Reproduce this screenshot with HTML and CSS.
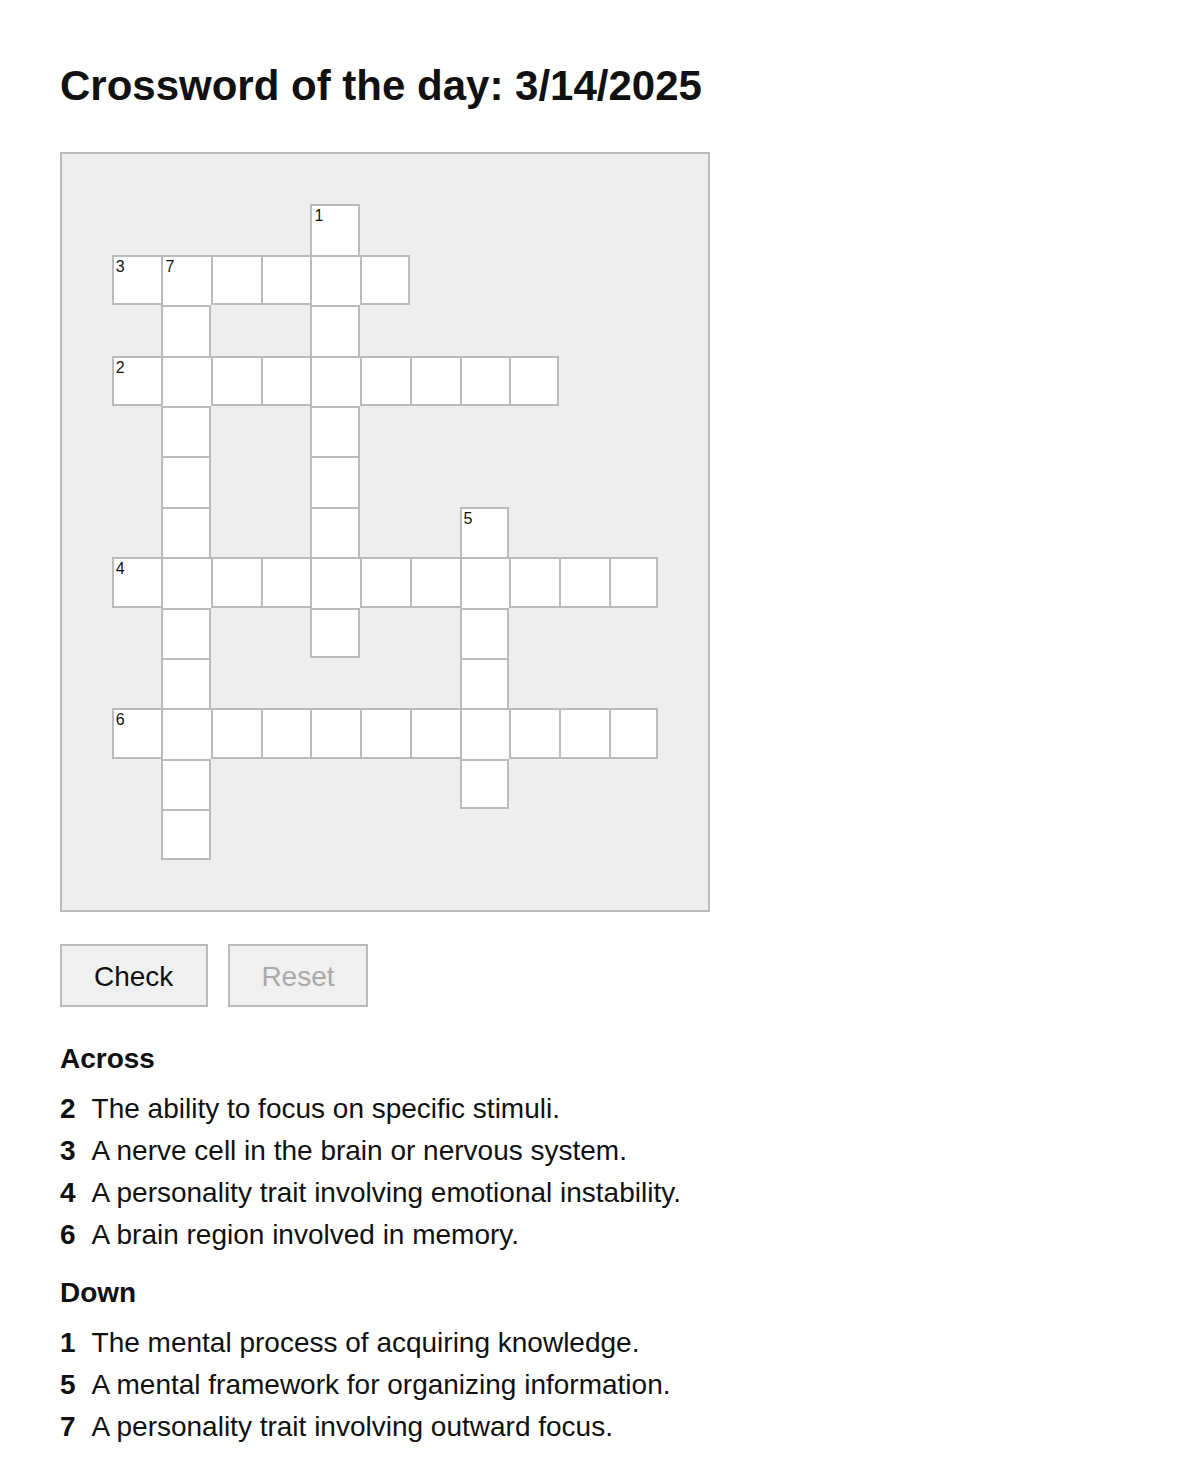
FILE: index.html
```html
<!DOCTYPE html>
<html lang="en">
<head>
<meta charset="utf-8">
<title>Crossword of the day</title>
<link rel="stylesheet" href="styles.css">
</head>
<body>
<main class="page">
  <h1 class="title">Crossword of the day: 3/14/2025</h1>

  <div class="board">
    <div class="cell er" style="grid-area:2/6"><span class="num">1</span></div>

    <div class="cell eb" style="grid-area:3/2"><span class="num">3</span></div>
    <div class="cell" style="grid-area:3/3"><span class="num">7</span></div>
    <div class="cell eb" style="grid-area:3/4"></div>
    <div class="cell eb" style="grid-area:3/5"></div>
    <div class="cell" style="grid-area:3/6"></div>
    <div class="cell er eb" style="grid-area:3/7"></div>

    <div class="cell er" style="grid-area:4/3"></div>
    <div class="cell er" style="grid-area:4/6"></div>

    <div class="cell eb" style="grid-area:5/2"><span class="num">2</span></div>
    <div class="cell" style="grid-area:5/3"></div>
    <div class="cell eb" style="grid-area:5/4"></div>
    <div class="cell eb" style="grid-area:5/5"></div>
    <div class="cell" style="grid-area:5/6"></div>
    <div class="cell eb" style="grid-area:5/7"></div>
    <div class="cell eb" style="grid-area:5/8"></div>
    <div class="cell eb" style="grid-area:5/9"></div>
    <div class="cell er eb" style="grid-area:5/10"></div>

    <div class="cell er" style="grid-area:6/3"></div>
    <div class="cell er" style="grid-area:6/6"></div>

    <div class="cell er" style="grid-area:7/3"></div>
    <div class="cell er" style="grid-area:7/6"></div>

    <div class="cell er" style="grid-area:8/3"></div>
    <div class="cell er" style="grid-area:8/6"></div>
    <div class="cell er" style="grid-area:8/9"><span class="num">5</span></div>

    <div class="cell eb" style="grid-area:9/2"><span class="num">4</span></div>
    <div class="cell" style="grid-area:9/3"></div>
    <div class="cell eb" style="grid-area:9/4"></div>
    <div class="cell eb" style="grid-area:9/5"></div>
    <div class="cell" style="grid-area:9/6"></div>
    <div class="cell eb" style="grid-area:9/7"></div>
    <div class="cell eb" style="grid-area:9/8"></div>
    <div class="cell" style="grid-area:9/9"></div>
    <div class="cell eb" style="grid-area:9/10"></div>
    <div class="cell eb" style="grid-area:9/11"></div>
    <div class="cell er eb" style="grid-area:9/12"></div>

    <div class="cell er" style="grid-area:10/3"></div>
    <div class="cell er eb" style="grid-area:10/6"></div>
    <div class="cell er" style="grid-area:10/9"></div>

    <div class="cell er" style="grid-area:11/3"></div>
    <div class="cell er" style="grid-area:11/9"></div>

    <div class="cell eb" style="grid-area:12/2"><span class="num">6</span></div>
    <div class="cell" style="grid-area:12/3"></div>
    <div class="cell eb" style="grid-area:12/4"></div>
    <div class="cell eb" style="grid-area:12/5"></div>
    <div class="cell eb" style="grid-area:12/6"></div>
    <div class="cell eb" style="grid-area:12/7"></div>
    <div class="cell eb" style="grid-area:12/8"></div>
    <div class="cell" style="grid-area:12/9"></div>
    <div class="cell eb" style="grid-area:12/10"></div>
    <div class="cell eb" style="grid-area:12/11"></div>
    <div class="cell er eb" style="grid-area:12/12"></div>

    <div class="cell er" style="grid-area:13/3"></div>
    <div class="cell er eb" style="grid-area:13/9"></div>

    <div class="cell er eb" style="grid-area:14/3"></div>
  </div>

  <div class="actions">
    <button class="btn btn-check" type="button">Check</button>
    <button class="btn btn-reset" type="button" disabled>Reset</button>
  </div>

  <section class="clues">
    <h2 class="clues-title">Across</h2>
    <ul class="clue-list">
      <li class="clue"><span class="clue-num">2</span><span>The ability to focus on specific stimuli.</span></li>
      <li class="clue"><span class="clue-num">3</span><span>A nerve cell in the brain or nervous system.</span></li>
      <li class="clue"><span class="clue-num">4</span><span>A personality trait involving emotional instability.</span></li>
      <li class="clue"><span class="clue-num">6</span><span>A brain region involved in memory.</span></li>
    </ul>
  </section>

  <section class="clues clues-down">
    <h2 class="clues-title">Down</h2>
    <ul class="clue-list">
      <li class="clue"><span class="clue-num">1</span><span>The mental process of acquiring knowledge.</span></li>
      <li class="clue"><span class="clue-num">5</span><span>A mental framework for organizing information.</span></li>
      <li class="clue"><span class="clue-num">7</span><span>A personality trait involving outward focus.</span></li>
    </ul>
  </section>
</main>
</body>
</html>
```

FILE: styles.css
```css
html, body {
  margin: 0;
  padding: 0;
  background: #fff;
}

body {
  font-family: "Liberation Sans", Arial, sans-serif;
  color: #111;
}

.page {
  padding: 62px 60px 20px;
}

.title {
  margin: 0 0 42px;
  font-size: 42px;
  line-height: 48px;
  font-weight: 700;
}

.board {
  width: 650px;
  height: 760px;
  box-sizing: border-box;
  border: 2px solid #bbb;
  background: #eee;
  display: grid;
  grid-template-columns: repeat(13, 1fr);
  grid-template-rows: repeat(15, 1fr);
}

.cell {
  position: relative;
  box-sizing: border-box;
  background: #fff;
  border-left: 2px solid #bbb;
  border-top: 2px solid #bbb;
}

.cell.er {
  border-right: 2px solid #bbb;
}

.cell.eb {
  border-bottom: 2px solid #bbb;
}

.num {
  position: absolute;
  left: 2px;
  top: 1px;
  font-size: 16px;
  line-height: 18px;
  color: #111;
}

.actions {
  display: flex;
  gap: 20px;
  margin-top: 32px;
}

.btn {
  height: 63px;
  box-sizing: border-box;
  padding: 2px 32px 0;
  border: 2px solid #bbb;
  border-radius: 0;
  background: #f0f0f0;
  font-family: "Liberation Sans", Arial, sans-serif;
  font-size: 28px;
  color: #111;
}

.btn-check {
  padding: 2px 33px 0 32px;
}

.btn-reset {
  padding: 2px 31px 0;
}

.btn:disabled {
  color: #aaa;
}

.clues {
  margin-top: 36px;
}

.clues-down {
  margin-top: 21px;
}

.clues-title {
  margin: 0 0 13px;
  font-size: 28px;
  line-height: 32px;
  font-weight: 700;
}

.clue-list {
  list-style: none;
  margin: 0;
  padding: 0;
}

.clue {
  display: flex;
  font-size: 28px;
  line-height: 42px;
}

.clue-num {
  font-weight: 700;
  margin-right: 16px;
}
```
